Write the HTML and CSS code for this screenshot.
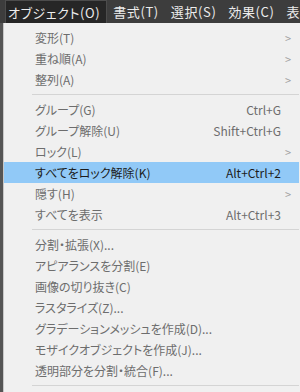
FILE: index.html
```html
<!DOCTYPE html>
<html lang="ja">
<head>
<meta charset="utf-8">
<link rel="stylesheet" href="styles.css">
</head>
<body>
<div class="app">
  <div class="menubar">
    <span class="mb-item active">オブジェクト(O)</span>
    <span class="mb-item">書式(T)</span>
    <span class="mb-item">選択(S)</span>
    <span class="mb-item">効果(C)</span>
    <span class="mb-item">表示</span>
  </div>
  <div class="main">
    <div class="strip"></div>
    <div class="menu">
      <div class="item"><span class="label">変形(T)</span><span class="key"></span><span class="arrow">&gt;</span></div>
      <div class="item"><span class="label">重ね順(A)</span><span class="key"></span><span class="arrow">&gt;</span></div>
      <div class="item"><span class="label">整列(A)</span><span class="key"></span><span class="arrow">&gt;</span></div>
      <div class="sep"></div>
      <div class="item"><span class="label">グループ(G)</span><span class="key">Ctrl+G</span><span class="arrow"></span></div>
      <div class="item"><span class="label">グループ解除(U)</span><span class="key">Shift+Ctrl+G</span><span class="arrow"></span></div>
      <div class="item"><span class="label">ロック(L)</span><span class="key"></span><span class="arrow">&gt;</span></div>
      <div class="item hl"><span class="label">すべてをロック解除(K)</span><span class="key">Alt+Ctrl+2</span><span class="arrow"></span></div>
      <div class="item"><span class="label">隠す(H)</span><span class="key"></span><span class="arrow">&gt;</span></div>
      <div class="item"><span class="label">すべてを表示</span><span class="key">Alt+Ctrl+3</span><span class="arrow"></span></div>
      <div class="sep"></div>
      <div class="item"><span class="label">分割・拡張(X)...</span><span class="key"></span><span class="arrow"></span></div>
      <div class="item"><span class="label">アピアランスを分割(E)</span><span class="key"></span><span class="arrow"></span></div>
      <div class="item"><span class="label">画像の切り抜き(C)</span><span class="key"></span><span class="arrow"></span></div>
      <div class="item"><span class="label">ラスタライズ(Z)...</span><span class="key"></span><span class="arrow"></span></div>
      <div class="item"><span class="label">グラデーションメッシュを作成(D)...</span><span class="key"></span><span class="arrow"></span></div>
      <div class="item"><span class="label">モザイクオブジェクトを作成(J)...</span><span class="key"></span><span class="arrow"></span></div>
      <div class="item"><span class="label">透明部分を分割・統合(F)...</span><span class="key"></span><span class="arrow"></span></div>
      <div class="sep"></div>
    </div>
  </div>
</div>
</body>
</html>
```
FILE: styles.css
```css
html, body {
  margin: 0;
  padding: 0;
}
body {
  width: 300px;
  height: 392px;
  overflow: hidden;
  background: #f0f0f0;
  font-family: "Noto Sans CJK JP", "Noto Sans", sans-serif;
  font-feature-settings: "palt" 1;
}
.app {
  display: flex;
  flex-direction: column;
  height: 392px;
}
.menubar {
  height: 23px;
  background: #3d3d3d;
  display: flex;
  align-items: stretch;
  padding-left: 5px;
  flex-shrink: 0;
  white-space: nowrap;
  overflow: hidden;
}
.mb-item {
  display: flex;
  align-items: center;
  padding: 0 6px;
  color: #ececec;
  font-size: 13px;
  letter-spacing: 0.6px;
}
.mb-item.active {
  background: #262626;
  border: 1px solid #4c4c4c;
  border-bottom: none;
  padding: 0 6px 0 2px;
}
.main {
  display: flex;
  flex: 1;
}
.strip {
  width: 3px;
  background: #555;
  flex-shrink: 0;
}
.menu {
  flex: 1;
  background: #f0f0f0;
  border-left: 1px solid #c8c8c8;
  padding-top: 4px;
  padding-right: 1px;
}
.item {
  height: 21px;
  display: flex;
  align-items: center;
  padding-left: 31px;
  font-size: 12px;
  color: #6d6d6d;
  white-space: nowrap;
}
.item.hl {
  background: #91c9f7;
  color: #1c1c1c;
}
.label {
  flex: 1;
}
.key {
  padding-right: 4px;
}
.arrow {
  width: 14px;
  color: #a0a0a0;
  font-size: 11px;
  text-align: left;
}
.sep {
  height: 9px;
  display: flex;
  align-items: center;
  padding-left: 28px;
}
.sep::after {
  content: "";
  display: block;
  flex: 1;
  height: 1px;
  background: #d4d4d4;
}
```
